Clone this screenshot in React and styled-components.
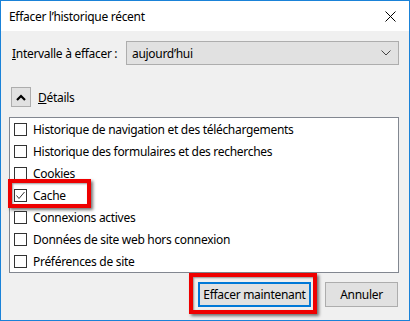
import React from "react";
import styled, { createGlobalStyle } from "styled-components";

const Global = createGlobalStyle`
  html, body { margin: 0; padding: 0; background: #ffffff; }
  * { box-sizing: border-box; }
`;

const items = [
  { label: "Historique de navigation et des téléchargements", checked: false },
  { label: "Historique des formulaires et des recherches", checked: false },
  { label: "Cookies", checked: false },
  { label: "Cache", checked: true, marked: true },
  { label: "Connexions actives", checked: false },
  { label: "Données de site web hors connexion", checked: false },
  { label: "Préférences de site", checked: false },
];

class App extends React.Component {
  render() {
    return (
      <Window>
        <Global />
        <TitleBar>
          <Title>Effacer l’historique récent</Title>
          <Close>
            <svg width="11" height="11" viewBox="0 0 11 11">
              <path d="M0.5 0.5 L10.5 10.5 M10.5 0.5 L0.5 10.5" stroke="#000" strokeWidth="1" />
            </svg>
          </Close>
        </TitleBar>
        <Body>
          <RangeRow>
            <Label><u>I</u>ntervalle à effacer :</Label>
            <Select>
              <span>aujourd’hui</span>
              <svg width="10" height="6" viewBox="0 0 10 6">
                <polyline points="0.5,0.5 5,5 9.5,0.5" fill="none" stroke="#444" strokeWidth="1" />
              </svg>
            </Select>
          </RangeRow>
          <DetailsRow>
            <Toggle>
              <svg width="10" height="7" viewBox="0 0 10 7">
                <polyline points="1,6 5,2 9,6" fill="none" stroke="#000" strokeWidth="2.2" />
              </svg>
            </Toggle>
            <DetailsLabel><u>D</u>étails</DetailsLabel>
          </DetailsRow>
          <List>
            {items.map((item) => (
              <Item key={item.label}>
                <Box>
                  {item.checked && (
                    <svg width="11" height="11" viewBox="0 0 11 11">
                      <polyline points="1.5,5.5 4,8.5 9.5,2" fill="none" stroke="#333" strokeWidth="1" />
                    </svg>
                  )}
                </Box>
                <span>{item.label}</span>
                {item.marked && <Marker $top={-5} $left={-2} $width={83} $height={29} />}
              </Item>
            ))}
          </List>
          <Buttons>
            <ButtonWrap>
              <Button $focused>Effacer maintenant</Button>
              <Marker $top={-9} $left={-9} $width={128} $height={41} />
            </ButtonWrap>
            <Button $width={73}>Annuler</Button>
          </Buttons>
        </Body>
      </Window>
    );
  }
}

export default App;

const Window = styled.div`
  width: 410px;
  height: 321px;
  border: 1px solid #1a82d8;
  background: #f0f0f0;
  display: flex;
  flex-direction: column;
  font-family: "Noto Sans", "Open Sans", sans-serif;
  font-size: 12px;
  letter-spacing: -0.3px;
  color: #000;
`;

const TitleBar = styled.div`
  height: 30px;
  background: #ffffff;
  display: flex;
  align-items: center;
  justify-content: space-between;
  padding: 0 13px 0 8px;
`;

const Title = styled.div`
  font-size: 12px;
`;

const Close = styled.div`
  display: flex;
  align-items: center;
`;

const Body = styled.div`
  flex: 1;
  padding: 10px 10px 0 8px;
  display: flex;
  flex-direction: column;
`;

const RangeRow = styled.div`
  display: flex;
  align-items: center;
  height: 24px;
`;

const Label = styled.div`
  width: 117px;
  padding-left: 3px;
  u { text-decoration: underline; }
`;

const Select = styled.div`
  flex: 1;
  height: 24px;
  background: #e1e1e1;
  border: 1px solid #adadad;
  display: flex;
  align-items: center;
  justify-content: space-between;
  padding: 0 7px 0 5px;
`;

const DetailsRow = styled.div`
  display: flex;
  align-items: center;
  margin-top: 22px;
  height: 20px;
`;

const Toggle = styled.div`
  width: 20px;
  height: 20px;
  margin-left: 2px;
  border: 1px solid #adadad;
  background: #e1e1e1;
  display: flex;
  align-items: center;
  justify-content: center;
`;

const DetailsLabel = styled.div`
  margin-left: 7px;
`;

const List = styled.div`
  margin-top: 10px;
  height: 156px;
  background: #ffffff;
  border: 1px solid #828790;
  display: flex;
  flex-direction: column;
`;

const Item = styled.div`
  position: relative;
  height: 22px;
  display: flex;
  align-items: center;
  padding-left: 4px;
`;

const Box = styled.div`
  width: 13px;
  height: 13px;
  border: 1px solid #333;
  background: #fff;
  margin-right: 6px;
  display: flex;
  align-items: center;
  justify-content: center;
`;

const Marker = styled.div`
  position: absolute;
  top: ${(p) => p.$top}px;
  left: ${(p) => p.$left}px;
  width: ${(p) => p.$width}px;
  height: ${(p) => p.$height}px;
  border: 4px solid #ee0000;
  box-shadow: 2px 2px 3px rgba(0, 0, 0, 0.55), inset 1px 1px 2px rgba(0, 0, 0, 0.4);
  pointer-events: none;
`;

const Buttons = styled.div`
  display: flex;
  justify-content: flex-end;
  gap: 14px;
  margin-top: 9px;
  padding-right: 1px;
`;

const ButtonWrap = styled.div`
  position: relative;
`;

const Button = styled.div`
  width: ${(p) => p.$width || 113}px;
  height: 25px;
  background: #e1e1e1;
  border: ${(p) => (p.$focused ? "2px solid #0078d7" : "1px solid #adadad")};
  display: flex;
  align-items: center;
  justify-content: center;
`;
